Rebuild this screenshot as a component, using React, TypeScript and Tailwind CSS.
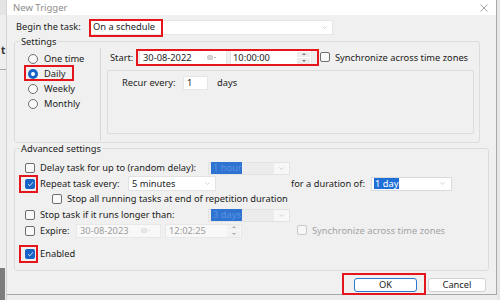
import React from "react";

const Check = ({ checked = false, disabled = false }: { checked?: boolean; disabled?: boolean }) =>
  checked ? (
    <span className="inline-flex w-[10px] h-[10px] rounded-[2px] bg-[#1763c6] items-center justify-center shrink-0">
      <svg width="7" height="6" viewBox="0 0 7 6">
        <path d="M1 3.2 L2.8 4.8 L6 1.2" stroke="#cfe0f7" strokeWidth="1" fill="none" />
      </svg>
    </span>
  ) : disabled ? (
    <span className="inline-block w-[10px] h-[10px] rounded-[2px] border border-[#c9c9c9] bg-[#f6f6f6] shrink-0" />
  ) : (
    <span className="inline-block w-[10px] h-[10px] rounded-[2px] border border-[#6e6e6e] bg-[#f9f9f9] shrink-0" />
  );

const Radio = ({ checked = false }: { checked?: boolean }) =>
  checked ? (
    <span className="inline-flex w-[10px] h-[10px] rounded-full bg-[#1763c6] items-center justify-center shrink-0">
      <span className="w-[4px] h-[4px] rounded-full bg-white" />
    </span>
  ) : (
    <span className="inline-block w-[10px] h-[10px] rounded-full border border-[#6e6e6e] bg-[#f9f9f9] shrink-0" />
  );

const Chevron = ({ light = false }: { light?: boolean }) => (
  <svg width="5" height="3" viewBox="0 0 5 3">
    <path d="M0.5 0.5 L2.5 2.5 L4.5 0.5" stroke={light ? "#c4c4c4" : "#8a8a8a"} strokeWidth="0.8" fill="none" />
  </svg>
);

const Cal = ({ light = false }: { light?: boolean }) => (
  <svg width="10" height="5" viewBox="0 0 10 5">
    <rect x="0.5" y="0.5" width="5" height="4" rx="1" fill={light ? "#e6e6e6" : "#d3d3d3"} stroke={light ? "#d8d8d8" : "#b8b8b8"} strokeWidth="0.6" />
    <path d="M7 2 L8 3 L9 2" stroke={light ? "#cfcfcf" : "#9a9a9a"} strokeWidth="0.7" fill="none" />
  </svg>
);

const Spinner = ({ light = false }: { light?: boolean }) => (
  <span className={`flex flex-col w-[13px] h-[12px] mr-[1px] gap-[1px] ${light ? "opacity-60" : ""}`}>
    <span className="flex-1 bg-[#ededed] flex items-center justify-center">
      <svg width="4" height="2" viewBox="0 0 4 2"><path d="M0 2 L2 0 L4 2 Z" fill="#7a7a7a" /></svg>
    </span>
    <span className="flex-1 bg-[#ededed] flex items-center justify-center">
      <svg width="4" height="2" viewBox="0 0 4 2"><path d="M0 0 L2 2 L4 0 Z" fill="#7a7a7a" /></svg>
    </span>
  </span>
);

const Red = ({ className }: { className: string }) => (
  <span className={`absolute border-2 border-[#e5151c] pointer-events-none ${className}`} />
);

export default function App() {
  return (
    <div className="w-[500px] h-[300px] bg-[#ededed] flex overflow-hidden whitespace-nowrap font-['Noto_Sans'] text-[9.3px] leading-none text-[#1c1c1c]">
      {/* left background strip */}
      <div className="w-[7px] h-full flex flex-col bg-[#eeeeee] border-r border-[#d4d4d4]">
        <div className="h-[15px] bg-[#e4e4e4]" />
        <div className="h-[30px]" />
        <div className="h-[10px] text-[10px] font-bold text-[#333] pl-[1px]">t</div>
        <div className="h-[14px]" />
        <div className="h-[1px] bg-[#a9a9a9]" />
        <div className="flex-1" />
        <div className="h-[32px] bg-[#7d7d7d] w-[5px]" />
      </div>

      {/* window */}
      <div className="w-[490px] h-[295px] flex flex-col bg-[#f0f0f0] border-r border-b border-[#a8a8a8]">
        {/* title */}
        <div className="h-[15px] bg-white flex items-center justify-between pl-[6px] pr-[8px]">
          <span className="text-[#8c8c8c] text-[9.5px]">New Trigger</span>
          <svg width="8" height="8" viewBox="0 0 8 8">
            <path d="M0.5 0.5 L7.5 7.5 M7.5 0.5 L0.5 7.5" stroke="#8a8a8a" strokeWidth="0.8" />
          </svg>
        </div>

        {/* begin the task */}
        <div className="mt-[4px] h-[16px] flex items-center">
          <span className="ml-[9px] w-[74px]">Begin the task:</span>
          <div className="relative w-[243px] h-[15px] bg-white border border-[#e6e6e6] flex items-center justify-between pl-[2px] pr-[5px]">
            <span>On a schedule</span>
            <Chevron light />
            <Red className="left-[-2px] top-[-2px] w-[74px] h-[18px]" />
          </div>
        </div>

        {/* settings group */}
        <div className="relative mt-[6px] ml-[7px] w-[466px] h-[102px] border border-[#dcdcdc] rounded-[3px] flex">
          <span className="absolute top-[-6px] left-[5px] px-[1px] bg-[#f0f0f0] leading-[11px]">Settings</span>
          <div className="w-[85px] pt-[9px] pl-[13px] flex flex-col">
            <div className="h-[15px] flex items-center gap-[6px]"><Radio /><span>One time</span></div>
            <div className="relative h-[15px] flex items-center gap-[6px]">
              <Radio checked /><span>Daily</span>
              <Red className="left-[-4px] top-[-1px] w-[50px] h-[16px]" />
            </div>
            <div className="h-[15px] flex items-center gap-[6px]"><Radio /><span>Weekly</span></div>
            <div className="h-[15px] flex items-center gap-[6px]"><Radio /><span>Monthly</span></div>
          </div>
          <div className="w-[1px] bg-[#d6d6d6] mt-[6px] mb-[1px]" />
          <div className="flex flex-col">
            <div className="mt-[7px] h-[17px] flex items-center pl-[9px]">
              <span className="w-[29px]">Start:</span>
              <div className="relative flex items-center gap-[3px]">
                <div className="w-[88px] h-[15px] bg-white border border-[#e6e6e6] flex items-center justify-between pl-[3px] pr-[9px]">
                  <span>30-08-2022</span>
                  <Cal />
                </div>
                <div className="w-[82px] h-[15px] bg-white border border-[#e6e6e6] flex items-center justify-between pl-[2px]">
                  <span>10:00:00</span>
                  <Spinner />
                </div>
                <Red className="left-[-3px] right-[-7px] top-[-1px] bottom-[-1px]" />
              </div>
              <span className="ml-[8px]"><Check /></span>
              <span className="ml-[5px]">Synchronize across time zones</span>
            </div>
            <div className="mt-[4px] ml-[6px] w-[367px] h-[64px] border border-[#dcdcdc] rounded-[2px] flex flex-col">
              <div className="mt-[5px] h-[14px] flex items-center pl-[14px]">
                <span className="w-[61px]">Recur every:</span>
                <div className="w-[25px] h-[14px] bg-white border border-[#e6e6e6] flex items-center pl-[3px]">1</div>
                <span className="ml-[9px]">days</span>
              </div>
            </div>
          </div>
        </div>

        {/* advanced settings group */}
        <div className="relative mt-[5px] ml-[7px] w-[475px] h-[123px] border border-[#dcdcdc] rounded-[3px] flex flex-col pt-[11px]">
          <span className="absolute top-[-6px] left-[5px] px-[1px] bg-[#f0f0f0] leading-[11px]">Advanced settings</span>

          <div className="h-[16px] flex items-center pl-[10px]">
            <Check />
            <span className="ml-[5px] w-[168px]">Delay task for up to (random delay):</span>
            <div className="w-[82px] h-[13px] bg-[#ececec] border border-[#e3e3e3] flex items-center pl-[2px]">
              <span className="bg-[#2e73d2] text-[#5d93df] px-[2px] py-[1px] w-[31px]">1 hour</span>
              <span className="flex-1" />
              <span className="w-[15px] h-full bg-[#f7f7f7] flex items-center justify-center"><Chevron light /></span>
            </div>
          </div>

          <div className="h-[15px] flex items-center pl-[10px]">
            <span className="relative inline-flex">
              <Check checked />
              <Red className="left-[-6px] top-[-4px] w-[19px] h-[18px]" />
            </span>
            <span className="ml-[5px] w-[88px]">Repeat task every:</span>
            <div className="w-[88px] h-[15px] bg-white border border-[#e3e3e3] flex items-center justify-between pl-[3px] pr-[5px]">
              <span>5 minutes</span>
              <Chevron light />
            </div>
            <span className="ml-[75px] w-[80px]">for a duration of:</span>
            <div className="w-[81px] h-[14px] bg-white border border-[#dadada] flex items-center justify-between pl-[2px] pr-[6px]">
              <span className="bg-[#1f6fd6] text-white px-[1px] py-[1px]">1 day</span>
              <Chevron light />
            </div>
          </div>

          <div className="h-[16px] flex items-center pl-[37px]">
            <Check />
            <span className="ml-[5px]">Stop all running tasks at end of repetition duration</span>
          </div>

          <div className="h-[16px] flex items-center pl-[10px]">
            <Check />
            <span className="ml-[5px] w-[168px]">Stop task if it runs longer than:</span>
            <div className="w-[82px] h-[13px] bg-[#ececec] border border-[#e3e3e3] flex items-center pl-[2px]">
              <span className="bg-[#2e73d2] text-[#5d93df] px-[2px] py-[1px] w-[31px]">3 days</span>
              <span className="flex-1" />
              <span className="w-[15px] h-full bg-[#f7f7f7] flex items-center justify-center"><Chevron light /></span>
            </div>
          </div>

          <div className="h-[15px] flex items-center pl-[10px]">
            <Check />
            <span className="ml-[5px] w-[36px]">Expire:</span>
            <div className="w-[85px] h-[14px] bg-[#f8f8f8] border border-[#e8e8e8] flex items-center justify-between pl-[3px] pr-[9px] text-[#9c9c9c]">
              <span>30-08-2023</span>
              <Cal light />
            </div>
            <div className="ml-[4px] w-[77px] h-[14px] bg-[#f8f8f8] border border-[#e8e8e8] flex items-center justify-between pl-[3px] text-[#9c9c9c]">
              <span>12:02:25</span>
              <Spinner light />
            </div>
            <span className="ml-[55px]"><Check disabled /></span>
            <span className="ml-[5px] text-[#a3a3a3]">Synchronize across time zones</span>
          </div>

          <div className="mt-[8px] h-[15px] flex items-center pl-[10px]">
            <span className="relative inline-flex">
              <Check checked />
              <Red className="left-[-6px] top-[-4px] w-[19px] h-[18px]" />
            </span>
            <span className="ml-[5px]">Enabled</span>
          </div>
        </div>

        {/* buttons */}
        <div className="mt-[7px] h-[14px] flex justify-end pr-[10px] gap-[11px]">
          <div className="relative w-[63px] h-[14px] bg-white border border-[#2b78d0] rounded-[3px] flex items-center justify-center">
            OK
            <Red className="left-[-13px] right-[-10px] top-[-6px] bottom-[-4px]" />
          </div>
          <div className="w-[58px] h-[14px] bg-white border border-[#d2d2d2] rounded-[3px] flex items-center justify-center">
            Cancel
          </div>
        </div>
      </div>
      <div className="flex-1 bg-[#e6e6e6]" />
    </div>
  );
}
